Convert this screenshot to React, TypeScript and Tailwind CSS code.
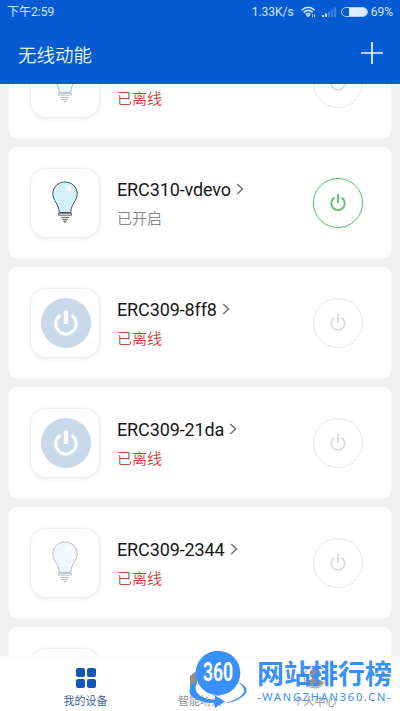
import React from "react";

interface IDevice {
  name: string;
  icon: "bulb" | "switch";
  online: boolean;
}

const devices: IDevice[] = [
  { name: "ERC310-2f1c", icon: "bulb", online: false },
  { name: "ERC310-vdevo", icon: "bulb", online: true },
  { name: "ERC309-8ff8", icon: "switch", online: false },
  { name: "ERC309-21da", icon: "switch", online: false },
  { name: "ERC309-2344", icon: "bulb", online: false },
  { name: "ERC309-70b2", icon: "bulb", online: false },
];

const Bulb: React.FC<{ online: boolean }> = ({ online }) => (
  <svg
    width="28"
    height="42"
    viewBox="0 0 28 42"
    fill="none"
    className={online ? "-mt-px text-[#4a5054]" : "-mt-px text-[#b9bcc0]"}
  >
    <path
      d="M8.2 31.5C8.2 23 1.8 20 1.8 12.8C1.8 6 7.2 1 14 1C20.8 1 26.2 6 26.2 12.8C26.2 20 19.8 23 19.8 31.5Z"
      fill={online ? "#d3f1fd" : "#eff8fd"}
      stroke="currentColor"
      strokeWidth="1"
    />
    <circle cx="17.5" cy="7.5" r="2.8" fill="#fff" opacity=".8" />
    <path
      d="M7.5 32.3h13v1.9h-13zM10 36.4h8M11 38.4h6M12.5 40.2h3L14 41.3z"
      stroke="currentColor"
      strokeWidth=".9"
    />
  </svg>
);

const Switch: React.FC = () => (
  <svg width="50" height="50" viewBox="0 0 50 50" fill="none" className="ml-[2px]">
    <circle cx="25" cy="25" r="25" fill="#c8d9e9" />
    <path d="M19.3 17.3A10.2 10.2 0 1 0 30.7 17.3" stroke="#fff" strokeWidth="3" />
    <path d="M25 12.5V26" stroke="#fff" strokeWidth="4.4" />
  </svg>
);

const PowerButton: React.FC<{ online: boolean }> = ({ online }) => (
  <div
    className={
      online
        ? "flex size-[50px] items-center justify-center rounded-full border border-[#65bd76] text-[#6abd78] ring-1 ring-[#e2fae5]"
        : "flex size-[50px] items-center justify-center rounded-full border border-[#e8e8e8] text-[#dedede]"
    }
  >
    <svg width="16" height="18" viewBox="0 0 16 18" fill="none" stroke="currentColor">
      <path d="M4.4 3.7A6.7 6.7 0 1 0 11.6 3.7" strokeWidth="2" />
      <path d="M8 0V9" strokeWidth="2" />
    </svg>
  </div>
);

const DeviceCard: React.FC<IDevice> = (props) => (
  <div className="flex h-[111px] shrink-0 items-center rounded-lg bg-white pl-[21px] pr-7">
    {/* icon */}
    <div className="flex size-[70px] items-center justify-center rounded-[16px] border border-[#eeeeee] bg-white shadow-[0_1px_4px_1px_rgba(0,0,0,0.05)]">
      {props.icon === "bulb" ? <Bulb online={props.online} /> : <Switch />}
    </div>
    {/* name and state */}
    <div className="ml-[17px] flex flex-1 flex-col pt-px">
      <div className="flex h-6 items-center">
        <span className="font-[Roboto,sans-serif] text-[18px] leading-6 tracking-[-0.12px] text-[#171717]">
          {props.name}
        </span>
        <svg width="8" height="12" viewBox="0 0 8 12" fill="none" className="-mt-[2px] ml-[5px]">
          <path d="M1.2 1L6.5 6L1.2 11" stroke="#777" strokeWidth="1.6" />
        </svg>
      </div>
      <span
        className={
          props.online
            ? "mt-[6px] text-[15px] font-[350] leading-5 text-[#858585]"
            : "mt-[6px] text-[15px] font-[350] leading-5 text-[#c8433a]"
        }
      >
        {props.online ? "已开启" : "已离线"}
      </span>
    </div>
    <PowerButton online={props.online} />
  </div>
);

const StatusBar: React.FC = () => (
  <div className="flex h-6 items-center justify-between px-[7px] font-[Roboto,'Noto_Sans_CJK_SC',sans-serif] text-xs text-[#cfe6ff]">
    <span>下午2:59</span>
    <div className="flex items-center">
      <span>1.33K/s</span>
      <svg width="15" height="12" viewBox="0 0 15 12" fill="none" className="ml-[7px]" stroke="currentColor" strokeWidth="1.5">
        <path d="M.7 4.2Q7.2-1.8 13.7 4.2M2.7 6.4Q7.2 2.3 11.7 6.4M4.7 8.6Q7.2 6.3 9.5 8.6" />
        <path d="M5.7 9.2h3L7.2 11zM11.5 8v3.2M13.6 8v3.2" fill="currentColor" strokeWidth=".8" />
      </svg>
      <svg width="14" height="10" viewBox="0 0 14 10" className="ml-[6px]" fill="currentColor">
        <path d="M0 8h2v2H0zM3 6.5h2V10H3z" />
        <path d="M6 4.5h2V10H6zM9 2.5h2V10H9zM12 .5h2V10h-2z" opacity=".28" />
      </svg>
      <div className="ml-[5px] flex h-[10px] w-[27px] justify-end rounded-full border border-[#a9cbf5]">
        <div className="w-[18px] rounded-r-full bg-[#dcecff]" />
      </div>
      <span className="ml-[3px]">69%</span>
    </div>
  </div>
);

const TabBar: React.FC = () => (
  <nav className="grid h-[55px] shrink-0 grid-cols-[171px_58px_171px] border-t border-[#f8f8f8] bg-white text-[11px] font-[350] text-[#8b8b8b]">
    <div className="flex flex-col items-center pt-[11px] text-[#2f5a98]">
      <div className="grid grid-cols-2 gap-[2px]">
        <span className="size-[9px] rounded-[2px] bg-[#1355b8]" />
        <span className="size-[9px] rounded-[2px] bg-[#1355b8]" />
        <span className="size-[9px] rounded-[2px] bg-[#1355b8]" />
        <span className="size-[9px] rounded-[2px] bg-[#1355b8]" />
      </div>
      <span className="mt-[4px] leading-4">我的设备</span>
    </div>
    <div className="flex flex-col items-center pt-[11px]">
      <svg width="20" height="20" viewBox="0 0 20 20" fill="#8f8f8f">
        <path d="M0 8L10 0l10 8v12h-7v-7H7v7H0z" />
      </svg>
      <span className="mt-[4px] leading-4">智能场景</span>
    </div>
    <div className="flex flex-col items-center pt-[8px]">
      <svg width="24" height="24" viewBox="0 0 24 24" fill="none">
        <circle cx="12" cy="12" r="11" stroke="#999" />
        <path
          d="M12 3.5a5.2 5.2 0 0 1 3 9.5c0 2 4 2 5.5 4.5A10.5 10.5 0 0 1 3.5 17.5C5 15 9 15 9 13A5.2 5.2 0 0 1 12 3.5z"
          fill="#8f8f8f"
        />
      </svg>
      <span className="mt-[4px] leading-4">个人中心</span>
    </div>
  </nav>
);

// floating site logo over the tab bar
const SiteMark: React.FC = () => (
  <div className="absolute bottom-0 left-[188px] flex h-[62px] text-[#3990f8]">
    <div className="relative h-[62px] w-[60px]">
      <svg width="60" height="62" viewBox="0 0 60 62">
        {/* orbit */}
        <path d="M8 35C7 44 19 48.5 30 48.5C43 48.5 53 45 52 37" fill="none" stroke="#fff" strokeWidth="2" />
        <path
          d="M7 33C0 39-1 46 8 50C14 53 20 54 26 54L27 59L37 52.5L27 46.5L27 51C19 51 9 47 8 41C7 38 8 36 9 34Z"
          fill="#3990f8"
        />
        <path
          d="M49 33C59 36 62 43 54 48C49 52 42 54 36 54.5C45 52 54 48 56 43C57 39 53 35 49 33Z"
          fill="#3990f8"
        />
        <circle cx="30" cy="24" r="22.3" fill="#3990f8" />
      </svg>
      <span className="absolute left-[15px] top-[12px] origin-left scale-x-[.7] font-[Roboto,sans-serif] text-[25px] font-bold leading-6 text-white">
        360
      </span>
    </div>
    <div className="ml-[9px] flex flex-col pt-[8px]">
      <span className="whitespace-nowrap text-[27px] font-bold leading-[32px]">网站排行榜</span>
      <span className="whitespace-nowrap font-['Noto_Sans',sans-serif] text-[11px] leading-4 tracking-[1.8px]">
        -WANGZHAN360.CN-
      </span>
    </div>
  </div>
);

const App: React.FC = () => {
  return (
    <div className="relative flex h-[711px] w-[400px] flex-col overflow-hidden bg-[#f1f1f1] font-['Noto_Sans_CJK_SC',sans-serif]">
      {/* header */}
      <header className="z-10 h-[84px] shrink-0 bg-[#075bd2]">
        <StatusBar />
        <div className="flex h-[60px] items-center justify-between pl-[18px] pr-[17px]">
          <h1 className="text-[18.5px] font-[350] leading-6 text-[#e4f6ff]">无线动能</h1>
          <svg width="22" height="22" viewBox="0 0 22 22" stroke="#e8f8ff" strokeWidth="1.7" className="-mt-[2px]">
            <path d="M11 0v22M0 11h22" />
          </svg>
        </div>
      </header>
      {/* device list, scrolled part of the way down */}
      <main className="h-[572px] shrink-0 overflow-hidden px-[9px]">
        <div className="-mt-[57px] flex flex-col gap-[9px]">
          {devices.map((device) => (
            <DeviceCard key={device.name} {...device} />
          ))}
        </div>
      </main>
      <TabBar />
      <SiteMark />
    </div>
  );
};

export default App;
